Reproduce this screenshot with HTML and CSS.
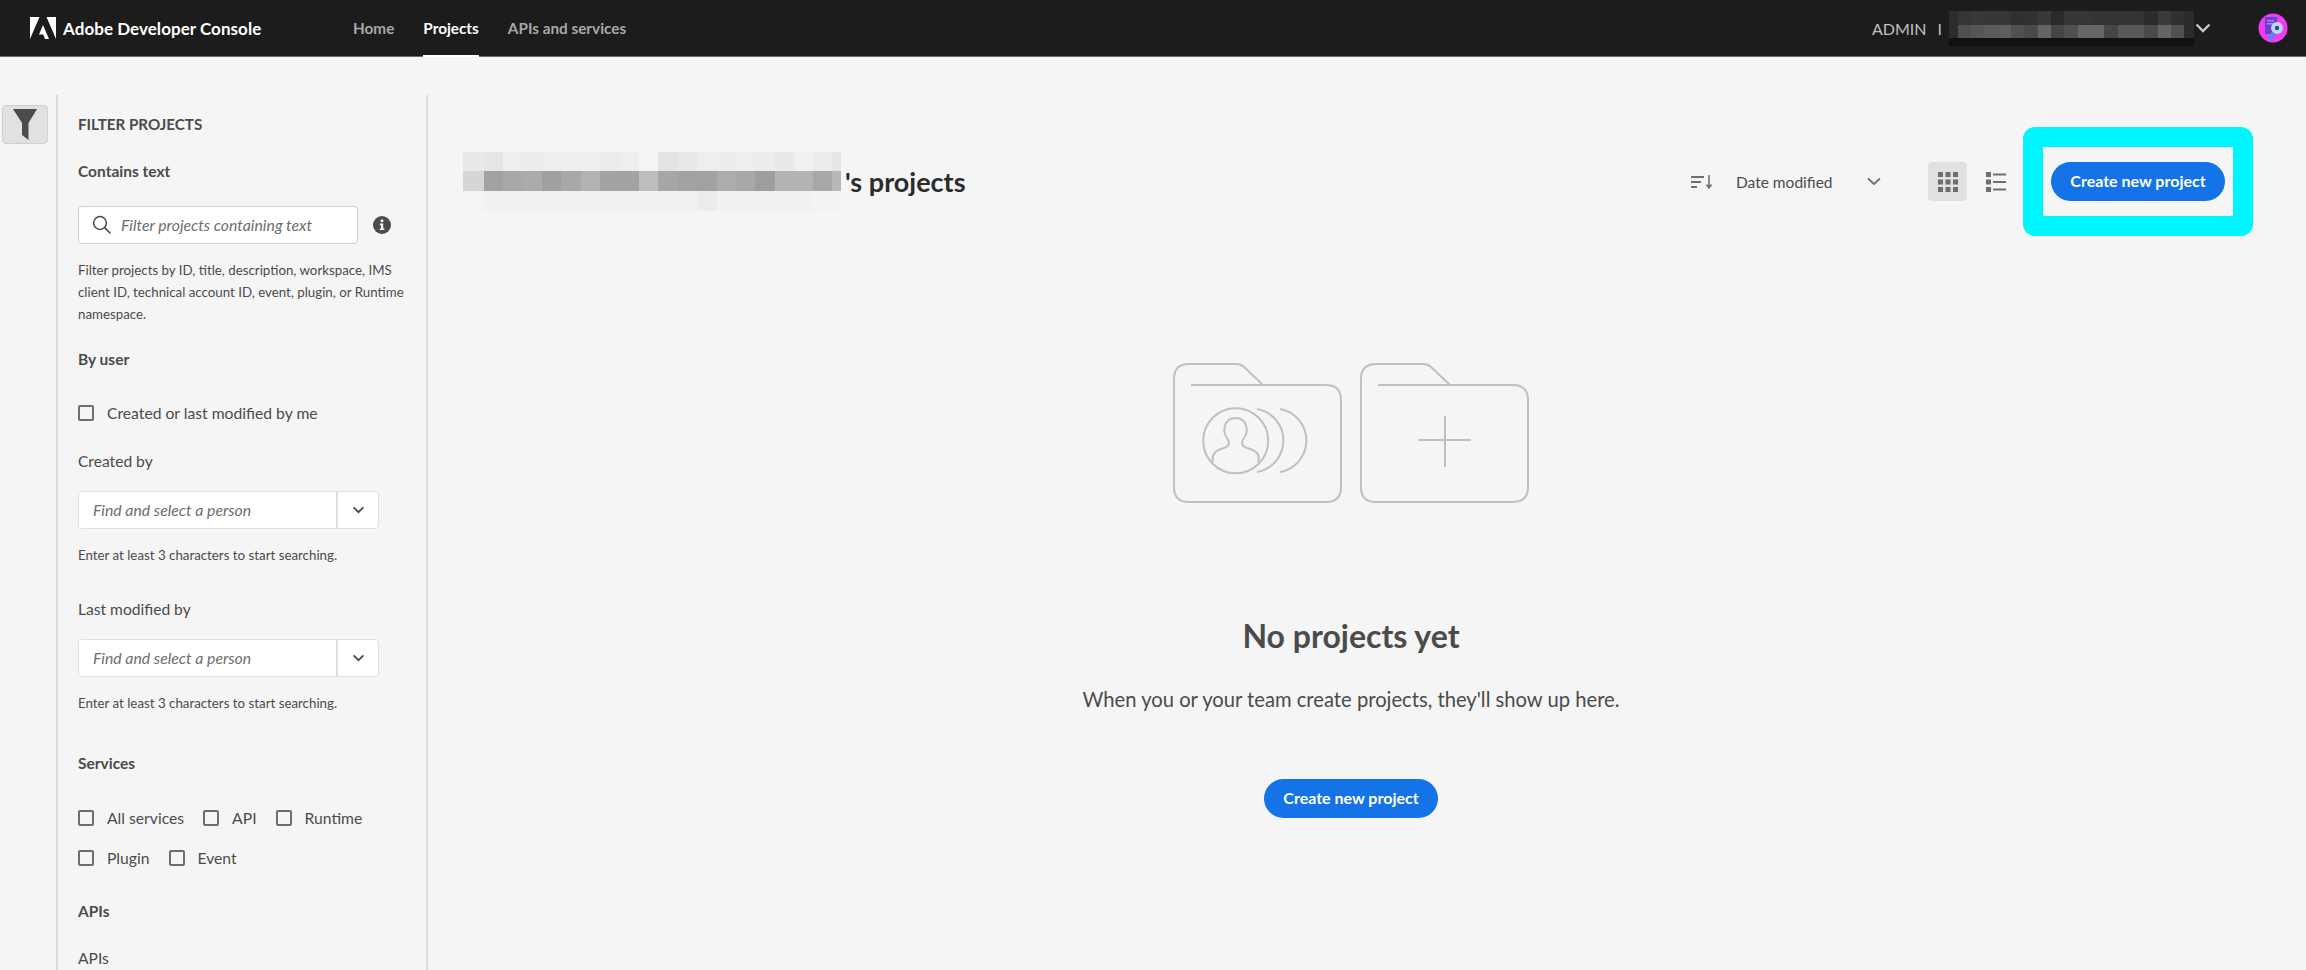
FILE: index.html
```html
<!DOCTYPE html>
<html lang="en">
<head>
  <meta charset="UTF-8" />
  <title>Adobe Developer Console</title>
  <link rel="stylesheet" href="styles.css">
</head>
<body>

  <header class="topbar">
    <div class="brand">
      <svg class="brand-logo" viewBox="0 0 26 22"><path d="M0 0H9.5L0 22ZM16.5 0H26V22ZM13 8 19 22H15L13.3 17.5H9Z" fill="#fff"/></svg>
      <span class="brand-name">Adobe Developer Console</span>
    </div>
    <nav class="nav">
      <a class="nav-link">Home</a>
      <a class="nav-link active">Projects</a>
      <a class="nav-link">APIs and services</a>
    </nav>
    <div class="account">
      <span class="org-role">ADMIN</span>
      <span class="org-sep">I</span>
      <svg class="org-mosaic" width="245" height="35" viewBox="0 0 245 35" shape-rendering="crispEdges">
        <rect width="245" height="35" fill="#2c2c2c"/>
        <g fill="#383838">
          <rect x="9" width="13" height="14" fill="#34343a"/><rect x="22" width="13" height="14"/><rect x="35" width="14" height="14" fill="#363636"/><rect x="49" width="13" height="14" fill="#363636"/><rect x="62" width="13" height="14" fill="#303030"/><rect x="75" width="14" height="14" fill="#313131"/><rect x="89" width="13" height="14"/><rect x="102" width="13" height="14" fill="#2a2a2a"/><rect x="115" width="14" height="14" fill="#363636"/><rect x="129" width="13" height="14" fill="#363636"/><rect x="142" width="13" height="14" fill="#343434"/><rect x="155" width="14" height="14" fill="#343434"/><rect x="169" width="13" height="14" fill="#343434"/><rect x="182" width="13" height="14" fill="#333333"/><rect x="195" width="14" height="14" fill="#2c2c2c"/><rect x="209" width="13" height="14" fill="#3a3a3a"/><rect x="222" width="13" height="14" fill="#303030"/>
        </g>
        <g>
          <rect x="9" y="14" width="13" height="13" fill="#505050"/><rect x="22" y="14" width="13" height="13" fill="#565656"/><rect x="35" y="14" width="14" height="13" fill="#5c5c5c"/><rect x="49" y="14" width="13" height="13" fill="#5e5e5e"/><rect x="62" y="14" width="13" height="13" fill="#505050"/><rect x="75" y="14" width="14" height="13" fill="#4a4a4a"/><rect x="89" y="14" width="13" height="13" fill="#646464"/><rect x="102" y="14" width="13" height="13" fill="#464646"/><rect x="115" y="14" width="14" height="13" fill="#505050"/><rect x="129" y="14" width="13" height="13" fill="#666666"/><rect x="142" y="14" width="13" height="13" fill="#666666"/><rect x="155" y="14" width="14" height="13" fill="#464646"/><rect x="169" y="14" width="13" height="13" fill="#585858"/><rect x="182" y="14" width="13" height="13" fill="#585858"/><rect x="195" y="14" width="14" height="13" fill="#4a4a4a"/><rect x="209" y="14" width="13" height="13" fill="#646464"/><rect x="222" y="14" width="13" height="13" fill="#505050"/>
        </g>
        <rect y="27" width="245" height="8" fill="#111111"/>
      </svg>
      <svg class="org-chevron" viewBox="0 0 16 10"><path d="M1.5 1.5 8 8l6.5-6.5" fill="none" stroke="#c8c8c8" stroke-width="2.4"/></svg>
      <svg class="avatar" viewBox="0 0 30 30">
        <circle cx="15" cy="15" r="14.5" fill="#f03cf0"/>
        <rect x="7" y="4" width="12" height="17" fill="#6a3fd0"/>
        <rect x="9" y="7" width="7" height="1.5" fill="#a88ae8"/>
        <rect x="9" y="10" width="7" height="1.5" fill="#a88ae8"/>
        <circle cx="19" cy="15" r="6" fill="#bcd6f5"/>
        <circle cx="19" cy="15" r="2.2" fill="#3a3fa8"/>
        <path d="M15 20 12 27" stroke="#2f9cf0" stroke-width="3.5"/>
      </svg>
    </div>
  </header>

  <div class="page">
    <div class="rail">
      <button class="filter-toggle">
        <svg viewBox="0 0 26 34" width="26" height="34"><path d="M1 1H25L16.5 15V32L10 27V15Z" fill="#4b4b4b"/></svg>
      </button>
    </div>

    <aside class="filters">
      <h2 class="filters-title">FILTER PROJECTS</h2>

      <h3 class="group-title first">Contains text</h3>
      <div class="search-row">
        <div class="search-box">
          <svg class="search-icon" viewBox="0 0 20 20"><circle cx="8" cy="8" r="6.4" fill="none" stroke="#4b4b4b" stroke-width="1.5"/><path d="M12.6 12.6 18.5 18.5" stroke="#4b4b4b" stroke-width="1.6"/></svg>
          <span class="placeholder">Filter projects containing text</span>
        </div>
        <svg class="info-icon" viewBox="0 0 18 18"><circle cx="9" cy="9" r="9" fill="#4b4b4b"/><circle cx="9" cy="4.8" r="1.5" fill="#f5f5f5"/><path d="M6.8 7.6H10.2V12.4H11.4V14H6.8V12.4H8V9.2H6.8Z" fill="#f5f5f5"/></svg>
      </div>
      <p class="help help-search">Filter projects by ID, title, description, workspace, IMS client ID, technical account ID, event, plugin, or Runtime namespace.</p>

      <h3 class="group-title by-user">By user</h3>
      <label class="check me"><span class="box"></span>Created or last modified by me</label>

      <div class="field-label created">Created by</div>
      <div class="combo">
        <span class="placeholder">Find and select a person</span>
        <span class="combo-btn"><svg viewBox="0 0 14 9" width="13" height="8"><path d="M1.5 1.5 7 7l5.500-5.500" fill="none" stroke="#4b4b4b" stroke-width="2"/></svg></span>
      </div>
      <p class="help hint">Enter at least 3 characters to start searching.</p>

      <div class="field-label modified">Last modified by</div>
      <div class="combo">
        <span class="placeholder">Find and select a person</span>
        <span class="combo-btn"><svg viewBox="0 0 14 9" width="13" height="8"><path d="M1.5 1.5 7 7l5.500-5.500" fill="none" stroke="#4b4b4b" stroke-width="2"/></svg></span>
      </div>
      <p class="help hint">Enter at least 3 characters to start searching.</p>

      <h3 class="group-title services">Services</h3>
      <div class="check-row">
        <label class="check"><span class="box"></span>All services</label>
        <label class="check"><span class="box"></span>API</label>
        <label class="check"><span class="box"></span>Runtime</label>
      </div>
      <div class="check-row second">
        <label class="check"><span class="box"></span>Plugin</label>
        <label class="check"><span class="box"></span>Event</label>
      </div>

      <h3 class="group-title apis">APIs</h3>
      <div class="field-label apis-label">APIs</div>
    </aside>

    <main class="main">
      <div class="toolbar">
        <h1 class="page-title">
          <svg class="name-mosaic" width="378" height="60" viewBox="0 0 378 60" shape-rendering="crispEdges">
            <rect x="0" width="21" height="19" fill="#e9e9e9"/><rect x="21" width="19" height="19" fill="#e6e6e6"/><rect x="40" width="20" height="19" fill="#eeeeee"/><rect x="60" width="19" height="19" fill="#ededed"/><rect x="79" width="19" height="19" fill="#eeeeee"/><rect x="98" width="20" height="19" fill="#efefef"/><rect x="118" width="19" height="19" fill="#eeeeee"/><rect x="137" width="19" height="19" fill="#ececec"/><rect x="156" width="20" height="19" fill="#eeeeee"/><rect x="176" width="19" height="19" fill="#f4f4f4"/><rect x="195" width="20" height="19" fill="#e3e3e3"/><rect x="215" width="19" height="19" fill="#e8e8e8"/><rect x="234" width="20" height="19" fill="#eeeeee"/><rect x="254" width="19" height="19" fill="#ededed"/><rect x="273" width="19" height="19" fill="#eeeeee"/><rect x="292" width="20" height="19" fill="#ededed"/><rect x="312" width="19" height="19" fill="#e9e9e9"/><rect x="331" width="19" height="19" fill="#f0f0f0"/><rect x="350" width="19" height="19" fill="#ececec"/><rect x="369" width="9" height="19" fill="#e6e6e6"/>
            <rect x="0" y="19" width="21" height="20" fill="#d6d6d6"/><rect x="21" y="19" width="19" height="20" fill="#a2a2a2"/><rect x="40" y="19" width="20" height="20" fill="#a8a8a8"/><rect x="60" y="19" width="19" height="20" fill="#ababab"/><rect x="79" y="19" width="19" height="20" fill="#a0a0a0"/><rect x="98" y="19" width="20" height="20" fill="#a8a8a8"/><rect x="118" y="19" width="19" height="20" fill="#b2b2b2"/><rect x="137" y="19" width="19" height="20" fill="#a3a3a3"/><rect x="156" y="19" width="20" height="20" fill="#a2a2a2"/><rect x="176" y="19" width="19" height="20" fill="#bdbdbd"/><rect x="195" y="19" width="20" height="20" fill="#a6a6a6"/><rect x="215" y="19" width="19" height="20" fill="#a2a2a2"/><rect x="234" y="19" width="20" height="20" fill="#a2a2a2"/><rect x="254" y="19" width="19" height="20" fill="#acacac"/><rect x="273" y="19" width="19" height="20" fill="#a8a8a8"/><rect x="292" y="19" width="20" height="20" fill="#9d9d9d"/><rect x="312" y="19" width="19" height="20" fill="#b4b4b4"/><rect x="331" y="19" width="19" height="20" fill="#b4b4b4"/><rect x="350" y="19" width="19" height="20" fill="#a8a8a8"/><rect x="369" y="19" width="9" height="20" fill="#b8b8b8"/>
            <rect x="0" y="39" width="21" height="20" fill="#f4f4f4"/><rect x="21" y="39" width="213" height="20" fill="#f1f1f1"/><rect x="234" y="39" width="20" height="20" fill="#ececec"/><rect x="254" y="39" width="96" height="20" fill="#f1f1f1"/><rect x="350" y="39" width="28" height="20" fill="#f3f3f3"/>
          </svg>
          <span>'s projects</span>
        </h1>
        <div class="sort">
          <svg class="sort-icon" viewBox="0 0 22 14"><path d="M0 1H13V3H0ZM0 6H10V8H0ZM0 11H6V13H0Z" fill="#6e6e6e"/><path d="M18 0V12M15.500 9.500 18 13l2.500-3.500" fill="none" stroke="#6e6e6e" stroke-width="1.500"/></svg>
          <span class="sort-label">Date modified</span>
          <svg class="sort-chevron" viewBox="0 0 14 9"><path d="M1 1.500 7 7l6-5.500" fill="none" stroke="#6e6e6e" stroke-width="1.700"/></svg>
        </div>
        <div class="view-btn selected">
          <svg viewBox="0 0 20 20" width="20" height="20"><path d="M0 0H5V5H0ZM7.500 0H12.500V5H7.500ZM15 0H20V5H15ZM0 7.500H5V12.500H0ZM7.500 7.500H12.500V12.500H7.500ZM15 7.500H20V12.500H15ZM0 15H5V20H0ZM7.500 15H12.500V20H7.500ZM15 15H20V20H15Z" fill="#6e6e6e"/></svg>
        </div>
        <div class="view-btn">
          <svg viewBox="0 0 20 20" width="20" height="20"><path d="M0 0H5V5H0ZM7 1.500H20V3.500H7ZM0 7.500H5V12.500H0ZM7 9H20V11H7ZM0 15H5V20H0ZM7 16.500H20V18.500H7Z" fill="#6e6e6e"/></svg>
        </div>
        <div class="cta-wrap">
          <a class="btn-primary">Create new project</a>
          <span class="highlight"></span>
        </div>
      </div>

      <section class="empty">
        <div class="folders">
          <svg class="folder" viewBox="-1 -1 170 140" width="170" height="140">
            <path d="M0 15Q0 0 15 0H62Q67 0 70 3L89 21H152Q167 21 167 36V123Q167 138 152 138H15Q0 138 0 123Z"/>
            <path d="M17 21H89"/>
            <circle cx="61.700" cy="76.700" r="32.500"/>
            <path d="M83 45A32 32 0 0 1 83 108M106 45A32 32 0 0 1 106 108"/>
            <path d="M39 98C37 90 42 86 50 84C56 82 56 78 53 74C48 67 50 54 61.700 54C73 54 75 67 70 74C67 78 67 82 73 84C81 86 87 90 84 98"/>
          </svg>
          <svg class="folder" viewBox="-1 -1 170 140" width="170" height="140">
            <path d="M0 15Q0 0 15 0H62Q67 0 70 3L89 21H152Q167 21 167 36V123Q167 138 152 138H15Q0 138 0 123Z"/>
            <path d="M17 21H89"/>
            <path d="M57 76H110M84 52V103"/>
          </svg>
        </div>
        <h2 class="empty-title">No projects yet</h2>
        <p class="empty-text">When you or your team create projects, they'll show up here.</p>
        <a class="btn-primary">Create new project</a>
      </section>
    </main>
  </div>

</body>
</html>
```

FILE: styles.css
```css
* {
  margin: 0; padding: 0; box-sizing: border-box;
}

html, body {
  height: 100%;
  overflow: hidden;
}

body {
  font-family: 'Lato', 'Liberation Sans', sans-serif;
  background: #f5f5f5;
  color: #4b4b4b;
  display: flex;
  flex-direction: column;
}

/* top bar */

.topbar {
  height: 57px;
  flex-shrink: 0;
  background: #1c1c1c;
  border-bottom: 1px solid #6e6e6e;
  display: flex;
  align-items: center;
  padding-left: 30px;
  padding-right: 18px;
}

.brand {
  display: flex;
  align-items: center;
  gap: 7px;
  width: 323px;
}

.brand-logo {
  width: 26px;
  height: 22px;
}

.brand-name {
  color: white;
  font-size: 17px;
  font-weight: 700;
  letter-spacing: 0.05px;
}

.nav {
  display: flex;
  gap: 29px;
  height: 100%;
}

.nav-link {
  color: #a8a8a8;
  font-size: 15.3px;
  font-weight: 700;
  line-height: 56px;
  height: 57px;
}

.nav-link.active {
  color: white;
  border-bottom: 2px solid white;
}

.account {
  margin-left: auto;
  display: flex;
  align-items: center;
}

.org-role {
  color: #c0c0c0;
  font-size: 16px;
}

.org-sep {
  color: #c0c0c0;
  font-size: 16px;
  margin-left: 11px;
  margin-right: 7px;
}

.org-mosaic {
  display: block;
}

.org-chevron {
  width: 16px;
  height: 10px;
  margin-left: 1px;
  margin-right: 47px;
}

.avatar {
  width: 30px;
  height: 30px;
}

/* page columns */

.page {
  flex: 1;
  display: flex;
  padding-top: 38px;
  min-height: 0;
}

.rail {
  width: 58px;
  flex-shrink: 0;
  border-right: 2px solid #dcdcdc;
  padding-left: 2px;
  padding-top: 10px;
}

.filter-toggle {
  width: 46px;
  height: 39px;
  background: #e1e1e1;
  border: 1px solid #d0d0d0;
  border-radius: 4px;
  display: flex;
  align-items: center;
  justify-content: center;
}

.filter-toggle svg {
  width: 26px;
  height: 34px;
}

/* filter column */

.filters {
  width: 370px;
  flex-shrink: 0;
  border-right: 2px solid #dcdcdc;
  padding-left: 20px;
  padding-right: 22px;
}

.filters-title {
  font-size: 15.2px;
  font-weight: 700;
  line-height: 20px;
  margin-top: 19px;
}

.group-title {
  font-size: 15.5px;
  font-weight: 700;
  line-height: 20px;
}

.group-title.first { margin-top: 27px; }
.group-title.by-user { margin-top: 24px; }
.group-title.services { margin-top: 39px; }
.group-title.apis { margin-top: 33px; }

.search-row {
  display: flex;
  align-items: center;
  margin-top: 25px;
}

.search-box {
  width: 280px;
  height: 38px;
  background: white;
  border: 1px solid #d0d0d0;
  border-radius: 4px;
  display: flex;
  align-items: center;
  padding-left: 13px;
  gap: 9px;
}

.search-icon {
  width: 20px;
  height: 20px;
}

.placeholder {
  font-size: 15.8px;
  font-style: italic;
  color: #6e6e6e;
  padding-bottom: 2px;
}

.info-icon {
  width: 18px;
  height: 18px;
  margin-left: 15px;
}

.help {
  font-size: 13.3px;
  line-height: 22px;
  color: #4b4b4b;
}

.help-search { margin-top: 15px; }

.hint { margin-top: 15px; }

.check {
  display: flex;
  align-items: center;
  font-size: 15.7px;
  line-height: 20px;
}

.check.me { margin-top: 34px; }

.box {
  width: 16px;
  height: 16px;
  border: 2px solid #6e6e6e;
  border-radius: 2px;
  margin-right: 13px;
  flex-shrink: 0;
}

.field-label {
  font-size: 15.6px;
  line-height: 20px;
}

.field-label.created { margin-top: 28px; }
.field-label.modified { margin-top: 33px; }
.field-label.apis-label { margin-top: 27px; }

.combo {
  width: 301px;
  height: 38px;
  margin-top: 20px;
  background: white;
  border: 1px solid #e1e1e1;
  border-radius: 4px;
  display: flex;
  align-items: center;
  padding-left: 14px;
  justify-content: space-between;
}

.combo-btn {
  width: 42px;
  height: 100%;
  border-left: 2px solid #e1e1e1;
  display: flex;
  align-items: center;
  justify-content: center;
}

.check-row {
  display: flex;
  gap: 19px;
  margin-top: 35px;
}

.check-row.second { margin-top: 20px; }

/* main column */

.main {
  flex: 1;
  min-width: 0;
  padding-left: 35px;
  padding-right: 67px;
}

.toolbar {
  display: flex;
  align-items: center;
  margin-top: 67px;
  height: 39px;
  padding-right: 14px;
}

.page-title {
  display: flex;
  align-items: center;
  font-size: 27px;
  font-weight: 700;
  color: #2c2c2c;
  margin-right: auto;
}

.name-mosaic {
  display: block;
  margin-right: 4px;
}

.sort {
  display: flex;
  align-items: center;
}

.sort-icon {
  width: 22px;
  height: 14px;
}

.sort-label {
  font-size: 15.5px;
  color: #4b4b4b;
  margin-left: 23px;
  width: 131px;
}

.sort-chevron {
  width: 14px;
  height: 9px;
}

.view-btn {
  width: 39px;
  height: 39px;
  border-radius: 4px;
  display: flex;
  align-items: center;
  justify-content: center;
}

.view-btn.selected {
  background: #e1e1e1;
  margin-left: 47px;
}

.view-btn + .view-btn {
  margin-left: 9px;
}

.btn-primary {
  display: inline-block;
  height: 39px;
  line-height: 38px;
  width: 174px;
  text-align: center;
  background: #1473e6;
  color: white;
  font-size: 16px;
  font-weight: 700;
  border-radius: 20px;
}

.cta-wrap {
  position: relative;
  margin-left: 36px;
}

.cta-wrap .btn-primary {
  display: block;
}

/* cyan annotation drawn over the button */
.highlight {
  position: absolute;
  top: -35px;
  bottom: -35px;
  left: -28px;
  right: -28px;
  border: 20px solid #00f6ff;
  border-radius: 12px;
  pointer-events: none;
}

/* empty state */

.empty {
  display: flex;
  flex-direction: column;
  align-items: center;
  margin-top: 162px;
}

.folders {
  display: flex;
  gap: 17px;
}

.folder {
  fill: none;
  stroke: #c0c0c0;
  stroke-width: 2;
}

.empty-title {
  font-size: 32px;
  font-weight: 700;
  line-height: 40px;
  margin-top: 113px;
}

.empty-text {
  font-size: 20.2px;
  line-height: 28px;
  margin-top: 29px;
}

.empty .btn-primary {
  margin-top: 66px;
}
```
